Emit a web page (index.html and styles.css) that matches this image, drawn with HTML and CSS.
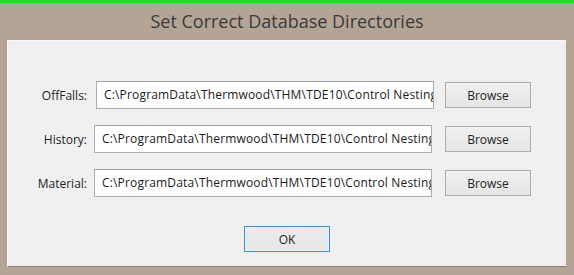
FILE: index.html
```html
<!DOCTYPE html>
<html lang="en">
<head>
<meta charset="utf-8">
<title>Set Correct Database Directories</title>
<link rel="stylesheet" href="styles.css">
</head>
<body>
<div class="topbar"></div>
<h1 class="title">Set Correct Database Directories</h1>
<div class="panel">
  <div class="rows">
    <label class="label">OffFalls:</label>
    <div class="field field--offset">C:\ProgramData\Thermwood\THM\TDE10\Control Nesting</div>
    <button class="btn">Browse</button>

    <label class="label">History:</label>
    <div class="field">C:\ProgramData\Thermwood\THM\TDE10\Control Nesting</div>
    <button class="btn">Browse</button>

    <label class="label">Material:</label>
    <div class="field">C:\ProgramData\Thermwood\THM\TDE10\Control Nesting</div>
    <button class="btn">Browse</button>
  </div>
  <div class="actions">
    <button class="btn btn--default">OK</button>
  </div>
</div>
</body>
</html>
```

FILE: styles.css
```css
html, body {
  margin: 0;
  padding: 0;
}
body {
  width: 574px;
  height: 275px;
  background: #b3a496;
  font-family: "Open Sans", "Noto Sans", sans-serif;
  overflow: hidden;
}
.topbar {
  height: 3px;
  background: #1fe01a;
}
.title {
  margin: 0;
  height: 37px;
  line-height: 37px;
  font-size: 18px;
  font-weight: 400;
  color: #3a3a3a;
  text-align: center;
}
.panel {
  margin-left: 7px;
  width: 559px;
  height: 227px;
  box-sizing: border-box;
  background: #f0f0f0;
  border-left: 1px solid #f7f7f7;
  border-top: 1px solid #f7f7f7;
  border-bottom: 1px solid #8c7f73;
  padding-top: 40px;
}
.rows {
  display: grid;
  grid-template-columns: 79px 338px 86px;
  column-gap: 7px;
  row-gap: 16px;
  align-items: center;
}
.label {
  justify-self: end;
  font-size: 12px;
  color: #1e1e1e;
}
.field {
  width: 338px;
  height: 28px;
  box-sizing: border-box;
  background: #fff;
  border: 1px solid #abadb3;
  border-top-color: #a0a2a8;
  padding: 0 0 0 7px;
  font-size: 12px;
  letter-spacing: 0.17px;
  line-height: 26px;
  color: #1a1a1a;
  white-space: nowrap;
  overflow: hidden;
}
.field--offset {
  margin-left: 2px;
}
.btn {
  width: 86px;
  height: 26px;
  box-sizing: border-box;
  border: 1px solid #adadad;
  background: linear-gradient(#f0f0f0, #e5e5e5);
  font-family: inherit;
  font-size: 12px;
  color: #1e1e1e;
  padding: 0;
  margin-left: 6px;
}
.actions {
  display: flex;
  justify-content: center;
  margin-top: 29px;
}
.btn--default {
  margin-left: 0;
  border-color: #3d8ee0;
  box-shadow: inset 0 0 0 1px #e8f2fb;
  background: linear-gradient(#ececec, #e6e6e6);
}
```
